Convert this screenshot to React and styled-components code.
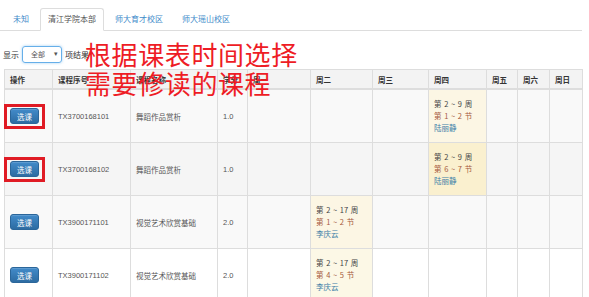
import React from 'react';
import styled, { createGlobalStyle } from 'styled-components';

const GlobalStyle = createGlobalStyle`
    html, body {
        margin: 0;
        padding: 0;
        background: #fff;
    }
    body {
        font-family: "Liberation Sans", "Noto Sans CJK SC", sans-serif;
        color: #333;
    }
`

const Page = styled.div`
    position: relative;
    width: 589px;
    height: 297px;
    overflow: hidden;
    padding-top: 8px;
    box-sizing: border-box;
`

const TabBar = styled.ul`
    display: flex;
    list-style: none;
    margin: 0;
    padding: 0 0 0 5px;
    width: 577px;
    border-bottom: 1px solid #ddd;
`

const Tab = styled.li`
    height: 21px;
    line-height: 21px;
    padding: 0 7px;
    margin-right: 3px;
    margin-bottom: -1px;
    font-size: 8px;
    color: ${p => (p.$active ? '#555' : '#428bca')};
    background: ${p => (p.$active ? '#fff' : 'transparent')};
    border: 1px solid ${p => (p.$active ? '#ddd' : 'transparent')};
    border-bottom-color: ${p => (p.$active ? '#fff' : 'transparent')};
    border-radius: 3px 3px 0 0;
`

const FilterRow = styled.div`
    display: flex;
    align-items: center;
    gap: 3px;
    height: 18px;
    margin: 14px 0 6px 3px;
    font-size: 8px;
    color: #333;
`

const FakeSelect = styled.span`
    display: flex;
    align-items: center;
    justify-content: space-between;
    box-sizing: border-box;
    width: 40px;
    height: 17px;
    padding: 0 3px 0 8px;
    border: 1px solid #66afe9;
    border-radius: 3px;
    box-shadow: 0 0 3px rgba(102, 175, 233, 0.6);
    font-size: 7px;
    color: #555;
`

const Table = styled.table`
    margin-left: 4px;
    width: 578px;
    table-layout: fixed;
    border-collapse: collapse;
    font-size: 7.5px;
`

const Th = styled.th`
    height: 18px;
    padding: 0 5px;
    text-align: left;
    font-weight: bold;
    color: #333;
    background: #f3f3f3;
    border: 1px solid #ddd;
    border-bottom-width: 2px;
    white-space: nowrap;
`

const Row = styled.tr`
    background: ${p => p.$bg};
`

const Td = styled.td`
    height: 36px;
    padding: 8px 5px;
    vertical-align: middle;
    border: 1px solid #ddd;
    color: #555;
    white-space: nowrap;
    background: ${p => p.$slot || 'transparent'};
`

const ActionWrap = styled.span`
    position: relative;
    display: inline-block;

    ${p => p.$marked && `
        &::after {
            content: '';
            position: absolute;
            left: -6px;
            right: -6px;
            top: -4px;
            bottom: -5px;
            border: 3px solid #e01b24;
        }
    `}
`

const SelectButton = styled.button`
    display: block;
    width: 29px;
    height: 16px;
    padding: 0;
    font-family: "Noto Sans CJK SC", sans-serif;
    font-size: 7.5px;
    color: #fff;
    border: 1px solid #2b669a;
    border-radius: 3px;
    background: linear-gradient(#428bca, #2d6ca2);
    box-shadow: inset 0 1px 0 rgba(255, 255, 255, 0.15);
`

const Slot = styled.div`
    display: flex;
    flex-direction: column;
    font-family: "Noto Sans CJK SC", sans-serif;
    font-size: 7.5px;
    line-height: 12px;
    word-spacing: 1px;
`

const SlotLine = styled.span`
    color: ${p => p.$color};
`

const Annotation = styled.div`
    position: absolute;
    left: 85px;
    top: 39px;
    font-family: "Noto Sans CJK SC", sans-serif;
    font-size: 26px;
    line-height: 29px;
    letter-spacing: 0.6px;
    color: #ee1c25;
    pointer-events: none;
`

const days = ['周一', '周二', '周三', '周四', '周五', '周六', '周日'];

const rows = [
    { id: 'TX3700168101', name: '舞蹈作品赏析', credit: '1.0', day: 3, weeks: '第 2 ~ 9 周', sect: '第 1 ~ 2 节', teacher: '陆丽静', marked: true, bg: '#f9f9f9', slot: '#fcf6e4' },
    { id: 'TX3700168102', name: '舞蹈作品赏析', credit: '1.0', day: 3, weeks: '第 2 ~ 9 周', sect: '第 6 ~ 7 节', teacher: '陆丽静', marked: true, bg: '#f5f5f5', slot: '#faf0cf' },
    { id: 'TX3900171101', name: '视觉艺术欣赏基础', credit: '2.0', day: 1, weeks: '第 2 ~ 17 周', sect: '第 1 ~ 2 节', teacher: '李庆云', bg: '#f9f9f9', slot: '#fcf6e4' },
    { id: 'TX3900171102', name: '视觉艺术欣赏基础', credit: '2.0', day: 1, weeks: '第 2 ~ 17 周', sect: '第 4 ~ 5 节', teacher: '李庆云', bg: '#fff', slot: '#fcf8e6' },
];

const colWidths = [48, 78, 87, 30, 63, 62, 56, 58, 31, 32, 33];

const App = () => {
    return (
        <Page>
            <GlobalStyle />

            <TabBar>
                <Tab>未知</Tab>
                <Tab $active>清江学院本部</Tab>
                <Tab>师大育才校区</Tab>
                <Tab>师大瑶山校区</Tab>
            </TabBar>

            <FilterRow>
                显示
                <FakeSelect>全部 <span>▾</span></FakeSelect>
                项结果
            </FilterRow>

            <Table>
                <colgroup>
                    {colWidths.map((w, i) => <col key={i} style={{ width: w }} />)}
                </colgroup>
                <thead>
                    <tr>
                        <Th>操作</Th>
                        <Th>课程序号</Th>
                        <Th>课程名称</Th>
                        <Th>学分</Th>
                        {days.map(d => <Th key={d}>{d}</Th>)}
                    </tr>
                </thead>
                <tbody>
                    {rows.map(r => (
                        <Row key={r.id} $bg={r.bg}>
                            <Td>
                                <ActionWrap $marked={r.marked}>
                                    <SelectButton>选课</SelectButton>
                                </ActionWrap>
                            </Td>
                            <Td>{r.id}</Td>
                            <Td>{r.name}</Td>
                            <Td>{r.credit}</Td>
                            {days.map((d, i) => (
                                i === r.day ? (
                                    <Td key={d} $slot={r.slot}>
                                        <Slot>
                                            <SlotLine $color="#444">{r.weeks}</SlotLine>
                                            <SlotLine $color="#a65a3e">{r.sect}</SlotLine>
                                            <SlotLine $color="#3d7fa8">{r.teacher}</SlotLine>
                                        </Slot>
                                    </Td>
                                ) : <Td key={d} />
                            ))}
                        </Row>
                    ))}
                </tbody>
            </Table>

            <Annotation>
                根据课表时间选择<br />
                需要修读的课程
            </Annotation>
        </Page>
    );
}

export default App;
